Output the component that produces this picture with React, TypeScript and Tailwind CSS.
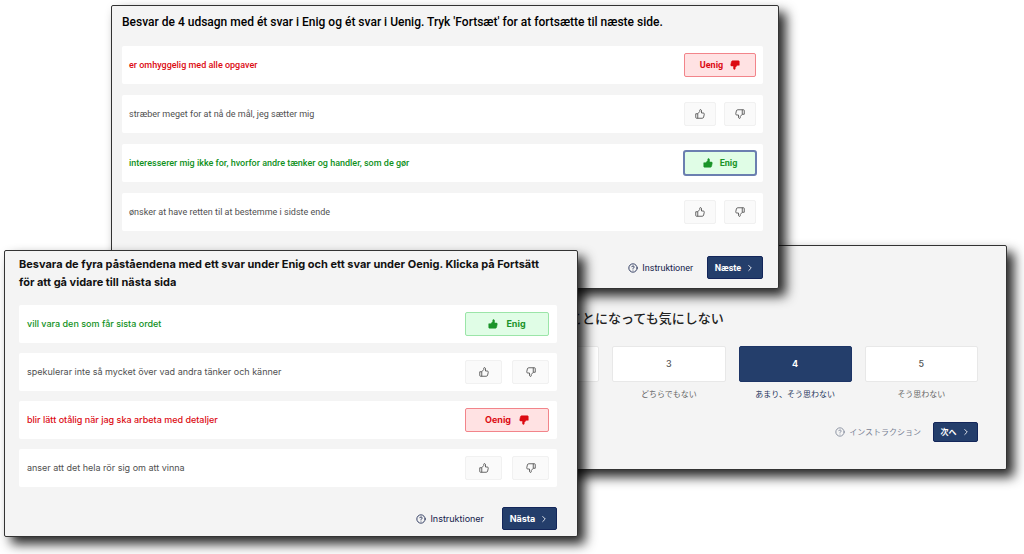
import type { ReactNode } from 'react';
import { ChevronRight, CircleHelp } from 'lucide-react';
import clsx from 'clsx';

type Answer = 'agree' | 'disagree' | null;

interface Statement {
  text: string;
  answer: Answer;
  focused?: boolean;
}

const danish: Statement[] = [
  { text: 'er omhyggelig med alle opgaver', answer: 'disagree' },
  { text: 'stræber meget for at nå de mål, jeg sætter mig', answer: null },
  {
    text: 'interesserer mig ikke for, hvorfor andre tænker og handler, som de gør',
    answer: 'agree',
    focused: true,
  },
  { text: 'ønsker at have retten til at bestemme i sidste ende', answer: null },
];

const swedish: Statement[] = [
  { text: 'vill vara den som får sista ordet', answer: 'agree' },
  { text: 'spekulerar inte så mycket över vad andra tänker och känner', answer: null },
  { text: 'blir lätt otålig när jag ska arbeta med detaljer', answer: 'disagree' },
  { text: 'anser att det hela rör sig om att vinna', answer: null },
];

const scale = [
  { value: 2, label: '' },
  { value: 3, label: 'どちらでもない' },
  { value: 4, label: 'あまり、そう思わない' },
  { value: 5, label: 'そう思わない' },
];

const Thumb = ({ down, filled }: { down?: boolean; filled?: boolean }) => (
  <svg
    viewBox="0 0 20 20"
    className={clsx('size-[10px] shrink-0', down && 'rotate-180')}
    fill={filled ? 'currentColor' : 'none'}
    stroke="currentColor"
    strokeWidth={filled ? 1 : 1.6}
    strokeLinejoin="round"
    aria-hidden="true"
  >
    <path d="M1.5 9.5h4L9.5 5V2.5c0-2 3.5-2 3.5 1V8h3.500c1.500 0 2.300 1 2 2.500l-1.200 5.500c-.3 1.500-1.300 2.500-2.800 2.500H3c-1 0-1.500-.5-1.500-1.500z" />
    {!filled && <path d="M5.500 9.500v9" />}
  </svg>
);

const StatementRow = ({
  statement,
  agree,
  disagree,
  wide,
}: {
  statement: Statement;
  agree: string;
  disagree: string;
  wide?: boolean;
}) => {
  const { text, answer, focused } = statement;

  return (
    <li
      className={clsx(
        'flex h-[38px] items-center justify-between rounded-xs bg-white',
        wide ? 'px-2' : 'px-[7px]',
      )}
    >
      <span
        className={clsx(
          answer === 'agree' && 'font-medium text-[#10911c]',
          answer === 'disagree' && 'font-medium text-[#dc0a12]',
          answer === null && 'text-[#505050]',
        )}
      >
        {text}
      </span>
      {answer === null ? (
        <div className={clsx('flex text-[#444]', wide ? 'gap-[10px]' : 'gap-2')}>
          {[false, true].map((down) => (
            <button
              key={String(down)}
              title={down ? disagree : agree}
              className={clsx(
                'flex h-6 items-center justify-center rounded-xs border border-[#f1f1f1] bg-[#fafafa]',
                wide ? 'w-[37px]' : 'w-8',
              )}
            >
              <Thumb down={down} />
            </button>
          ))}
        </div>
      ) : (
        <button
          className={clsx(
            'flex h-6 items-center justify-center rounded-xs border font-bold',
            wide ? 'w-[84px] gap-2' : 'w-[72px] gap-[7px]',
            answer === 'agree'
              ? 'border-[#9be5a8] bg-[#e0fde6] text-[#1b9429]'
              : 'border-[#f2848a] bg-[#ffe2e3] text-[#dc0a12]',
            focused && 'outline-2 -outline-offset-1 outline-[#6b7fb0]',
          )}
        >
          {answer === 'agree' && <Thumb filled />}
          {answer === 'agree' ? agree : disagree}
          {answer === 'disagree' && <Thumb filled down />}
        </button>
      )}
    </li>
  );
};

const Footer = ({
  help,
  next,
  className,
  buttonClass,
}: {
  help: string;
  next: string;
  className?: string;
  buttonClass?: string;
}) => (
  <footer className={clsx('flex items-center justify-end', className)}>
    <button className="flex items-center gap-1">
      <CircleHelp className="size-[10px]" />
      {help}
    </button>
    <button
      className={clsx(
        'flex items-center justify-center gap-1 rounded-xs border border-[#13265a] bg-[#243e6b] font-bold text-white',
        buttonClass,
      )}
    >
      {next}
      <ChevronRight className="size-[10px]" />
    </button>
  </footer>
);

const Panel = ({ className, children }: { className: string; children: ReactNode }) => (
  <section
    className={clsx(
      'absolute rounded-xs border border-[#333] bg-[#f4f4f4] shadow-[7px_7px_12px_rgba(0,0,0,0.85)]',
      className,
    )}
  >
    {children}
  </section>
);

export default function App() {
  return (
    <main className="relative min-h-screen overflow-hidden bg-white">
      {/* Japanese */}
      <Panel className="top-[245px] right-[17px] left-[469px] pt-16 pr-7 pb-[27px] pl-4 font-['Noto_Sans_CJK_JP',sans-serif] text-[8px] leading-3">
        <h2 className="pl-[83px] text-[13px] leading-4 font-medium text-[#222]">
          ことになっても気にしない
        </h2>
        <div className="mt-5 grid grid-cols-4 gap-[13px]">
          {scale.map(({ value, label }) => (
            <div key={value} className="flex flex-col items-center gap-[6px]">
              <button
                className={clsx(
                  "h-9 w-full rounded-xs border font-['Inter','Noto_Sans_CJK_JP',sans-serif] text-[9px]",
                  value === 4
                    ? 'border-[#1d3566] bg-[#243e6b] font-bold text-white'
                    : 'border-[#e8e8e8] bg-white font-medium text-[#555]',
                )}
              >
                {value}
              </button>
              <span className={value === 4 ? 'text-[#24345c]' : 'text-[#666]'}>{label}</span>
            </div>
          ))}
        </div>
        <Footer
          help="インストラクション"
          next="次へ"
          className="mt-[22px] gap-3 text-[#7a8294]"
          buttonClass="h-5 w-[45px]"
        />
      </Panel>

      {/* Danish */}
      <Panel className="top-[5px] right-[245px] left-[111px] pr-[15px] pb-[9px] pl-[10px] font-[Roboto,sans-serif] text-[9px] leading-3">
        <h2 className="pt-2 text-[12px] leading-4 font-medium text-black">
          Besvar de 4 udsagn med ét svar i Enig og ét svar i Uenig. Tryk 'Fortsæt' for at fortsætte
          til næste side.
        </h2>
        <ul className="mt-4 flex flex-col gap-[11px]">
          {danish.map((s) => (
            <StatementRow key={s.text} statement={s} agree="Enig" disagree="Uenig" />
          ))}
        </ul>
        <Footer
          help="Instruktioner"
          next="Næste"
          className="mt-[25px] gap-[14px] text-[#13204a]"
          buttonClass="h-[23px] w-14"
        />
      </Panel>

      {/* Swedish */}
      <Panel className="top-[250px] right-[446px] left-1 pt-1 pr-5 pb-[6px] pl-[14px] font-[Inter,sans-serif] text-[9px] leading-3">
        <h2 className="pr-4 text-[11px] leading-[18px] font-bold text-[#111]">
          Besvara de fyra påståendena med ett svar under Enig och ett svar under Oenig. Klicka på
          Fortsätt för att gå vidare till nästa sida
        </h2>
        <ul className="mt-[14px] flex flex-col gap-[10px]">
          {swedish.map((s) => (
            <StatementRow key={s.text} statement={s} agree="Enig" disagree="Oenig" wide />
          ))}
        </ul>
        <Footer
          help="Instruktioner"
          next="Nästa"
          className="mt-5 gap-[18px] text-[#13204a]"
          buttonClass="h-[23px] w-[55px]"
        />
      </Panel>
    </main>
  );
}
